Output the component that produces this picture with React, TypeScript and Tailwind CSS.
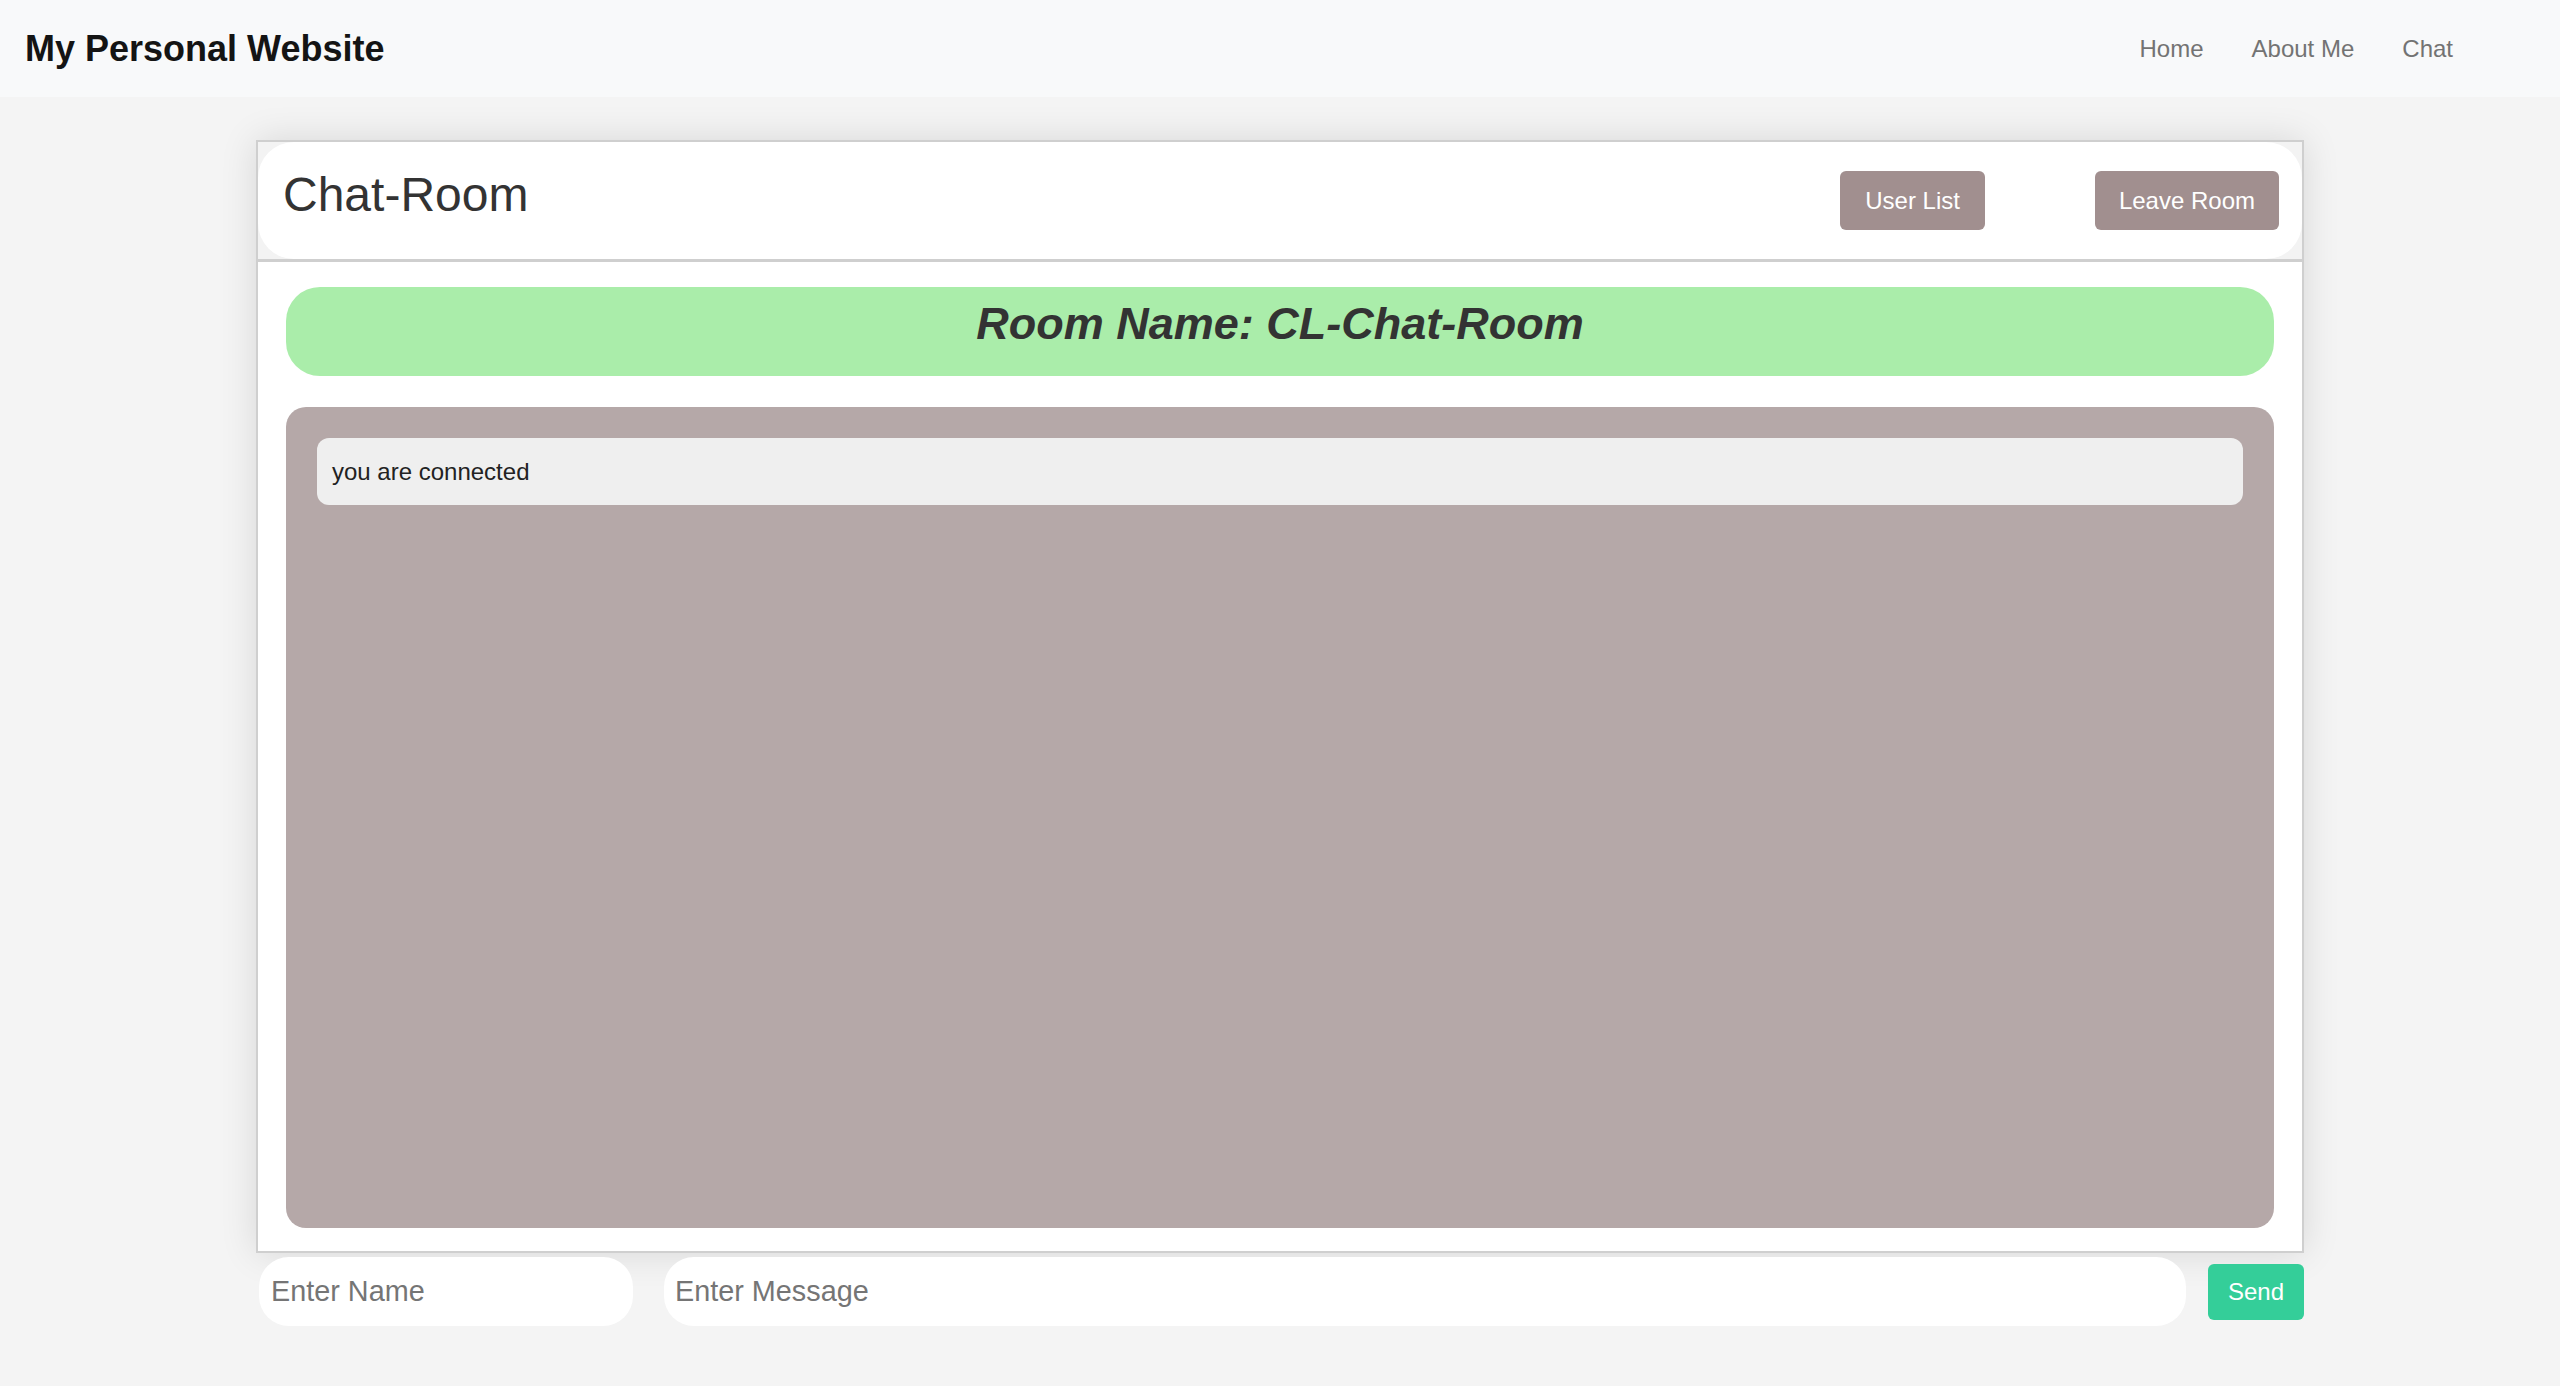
import React, { useState } from 'react';

export default function App() {
  const [name, setName] = useState('');
  const [message, setMessage] = useState('');

  return (
    <div className="min-h-screen bg-[#f4f4f4] font-['Liberation_Sans',Arial,sans-serif]">
      {/* Navbar */}
      <nav className="h-[97px] bg-[#f8f9fa] flex items-center justify-between pl-[25px] pr-[107px]">
        <a className="text-[36px] font-bold text-[#141414] leading-none">My Personal Website</a>
        <ul className="flex gap-[48px] text-[24px] text-[#737373] leading-none">
          <li>Home</li>
          <li>About Me</li>
          <li>Chat</li>
        </ul>
      </nav>

      <main className="w-4/5 mx-auto mt-[43px]">
        <div className="border-2 border-[#cfcfcf] bg-[#f3f3f3] shadow-[0_0_35px_rgba(0,0,0,0.12)]">
          {/* Header */}
          <div className="h-[117px] bg-white rounded-[36px] flex items-center pl-[25px] pr-[23px]">
            <h1 className="self-start mt-[24px] text-[48px] leading-[1.2] text-[#333]">Chat-Room</h1>
            <div className="ml-auto flex gap-[110px]">
              <button className="h-[59px] px-[25px] rounded-[6px] bg-[#a18f8f] text-white text-[24px]">User List</button>
              <button className="h-[59px] px-[24px] rounded-[6px] bg-[#a18f8f] text-white text-[24px]">Leave Room</button>
            </div>
          </div>

          {/* Body */}
          <div className="border-t-[3px] border-[#cfcfcf] bg-white px-[28px] pt-[25px] pb-[23px]">
            <div className="h-[89px] rounded-[34px] bg-[#aaedaa] flex justify-center pt-[10px]">
              <h2 className="text-[45px] leading-[1.2] font-bold italic text-[#333]">Room Name: CL-Chat-Room</h2>
            </div>
            <div className="mt-[31px] h-[821px] rounded-[20px] bg-[#b5a8a8] p-[31px]">
              <div className="h-[67px] rounded-[12px] bg-[#efefef] px-[15px] flex items-center text-[24px] text-[#222]">
                you are connected
              </div>
            </div>
          </div>
        </div>

        {/* Input row */}
        <form className="flex items-center mt-[4px] pl-[3px]" onSubmit={e => e.preventDefault()}>
          <input
            type="text"
            value={name}
            onChange={e => setName(e.target.value)}
            placeholder="Enter Name"
            className="w-[374px] h-[69px] rounded-[30px] bg-white px-[12px] text-[28.8px] text-[#333] placeholder:text-[#757575] outline-none"
          />
          <input
            type="text"
            value={message}
            onChange={e => setMessage(e.target.value)}
            placeholder="Enter Message"
            className="ml-[31px] flex-1 h-[69px] rounded-[30px] bg-white px-[11px] text-[28.8px] text-[#333] placeholder:text-[#757575] outline-none"
          />
          <button className="ml-[22px] h-[56px] px-[20px] rounded-[6px] bg-[#34ce99] text-white text-[24px]">Send</button>
        </form>
      </main>
    </div>
  );
}
